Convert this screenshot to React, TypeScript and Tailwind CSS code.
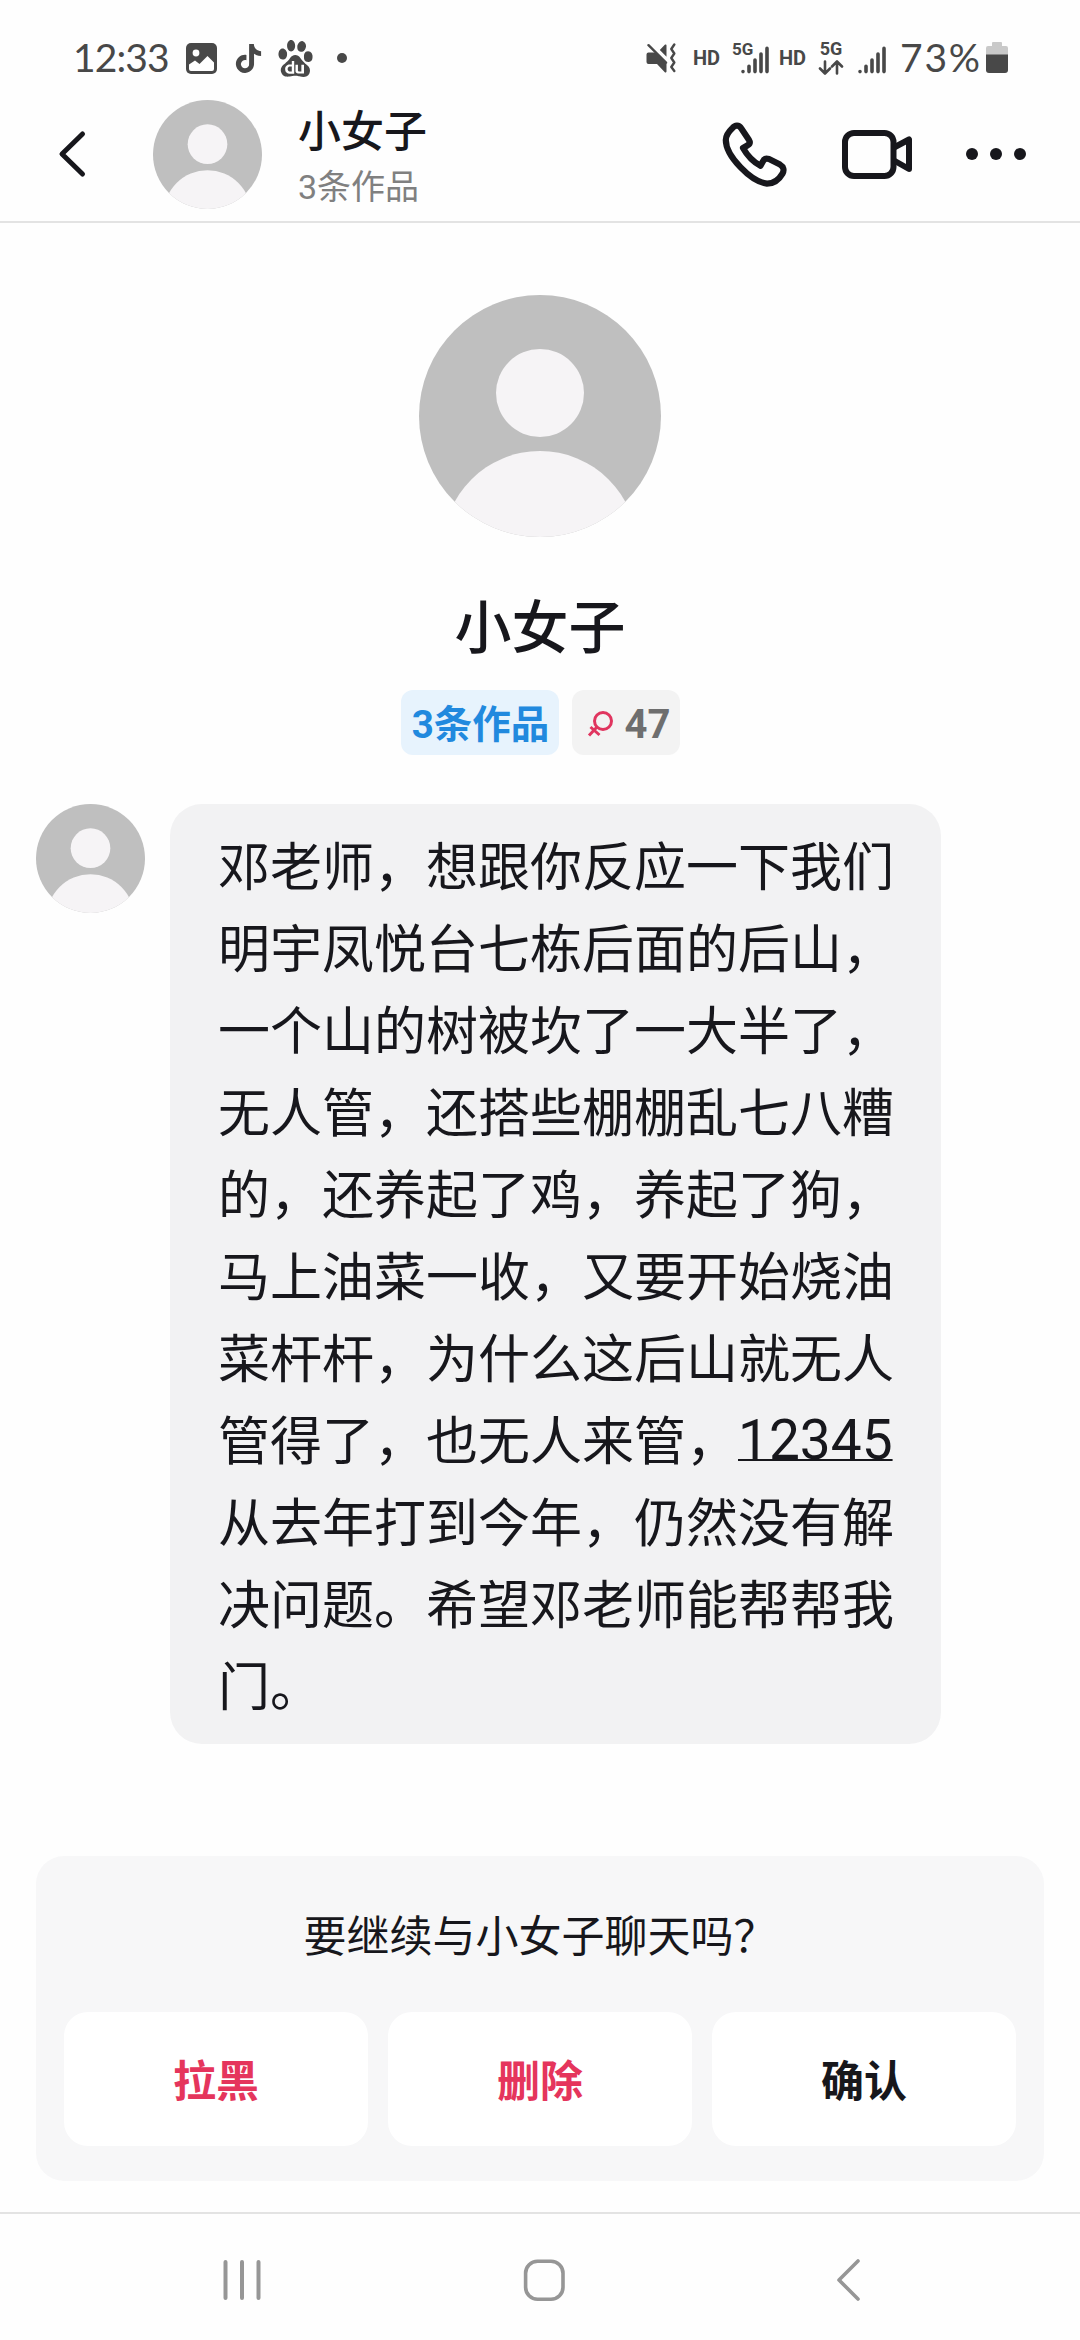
import { SiBaidu, SiTiktok } from 'react-icons/si';

const messageLines = [
  '邓老师，想跟你反应一下我们',
  '明宇凤悦台七栋后面的后山，',
  '一个山的树被坎了一大半了，',
  '无人管，还搭些棚棚乱七八糟',
  '的，还养起了鸡，养起了狗，',
  '马上油菜一收，又要开始烧油',
  '菜杆杆，为什么这后山就无人',
  '管得了，也无人来管，12345',
  '从去年打到今年，仍然没有解',
  '决问题。希望邓老师能帮帮我',
  '门。',
];

const actions = [
  { label: '拉黑', className: 'text-[#e5355c]' },
  { label: '删除', className: 'text-[#e5355c]' },
  { label: '确认', className: 'text-[#17171c]' },
];

function Avatar({ className }: { className: string }) {
  return (
    <div className={`shrink-0 overflow-hidden rounded-full bg-[#bfbfbf] ${className}`}>
      <svg viewBox="0 0 242 242" className="h-full w-full" fill="#f6f4f6">
        <circle cx="121" cy="98" r="44" />
        <circle cx="121" cy="253" r="97" />
      </svg>
    </div>
  );
}

function Signal({ className }: { className: string }) {
  return (
    <svg
      viewBox="0 0 28 28"
      className={`h-7 w-7 shrink-0 ${className}`}
      stroke="currentColor"
      strokeWidth="3.6"
      strokeLinecap="round"
    >
      <path d="M2 25.6v0M8 25.6v-5.4M14 25.6V14M20 25.6V8M26 25.6V2.4" />
    </svg>
  );
}

function StatusBar() {
  return (
    <div className="flex h-[100px] items-start pt-[38px] pl-[73px] text-[#484848]">
      <div className="flex h-10 w-[573px] items-center">
        <span className="w-[113px] pb-0.5 font-[Lato] text-[39px] leading-9 tracking-[-0.9px]">12:33</span>
        <svg viewBox="0 0 31 31" className="h-[31px] w-[31px]">
          <rect width="31" height="31" rx="5" fill="currentColor" />
          <circle cx="10" cy="10" r="3.4" fill="#fefefe" />
          <path
            d="M3 21.5l6-4 4.5 3.5L21.5 13l6.5 6.5V26a2 2 0 0 1-2 2H5a2 2 0 0 1-2-2z"
            fill="#fefefe"
          />
        </svg>
        <SiTiktok className="ml-[17px] h-[29px] w-[29px]" />
        <SiBaidu className="ml-[14px] h-[37px] w-[37px]" />
        <span className="ml-[23px] h-[10px] w-[10px] rounded-full bg-current" />
      </div>
      <div className="flex h-10 items-center font-[Roboto] font-bold">
        <svg viewBox="0 0 30 30" className="h-[30px] w-[30px]" fill="currentColor">
          <path d="M2.5 9.5h7l11 11v8a1 1 0 0 1-1.7.7L11 21H2.5A2 2 0 0 1 .5 19v-7.5a2 2 0 0 1 2-2zM13.8 7 18.8 1.8a1 1 0 0 1 1.7.7v11.2z" />
          <path
            d="M2.5 2.2 20 19.7M28.3 1.5l-3 4.5 3 4.5-3 4.5 3 4.5-3 4.5 3 4"
            fill="none"
            stroke="currentColor"
            strokeWidth="2.4"
            strokeLinecap="round"
            strokeLinejoin="round"
          />
        </svg>
        <span className="ml-[17px] w-[28px] text-[20px] leading-5">HD</span>
        <span className="ml-[11px] h-10 w-[9px] pt-px text-[17px] leading-5">5G</span>
        <Signal className="mt-1" />
        <span className="ml-[10px] w-[28px] text-[20px] leading-5">HD</span>
        <div className="ml-[11px] flex h-10 w-[26px] flex-col items-center">
          <span className="text-[18px] leading-[22px]">5G</span>
          <svg
            viewBox="0 0 26 15"
            className="h-[15px] w-[26px]"
            fill="none"
            stroke="currentColor"
            strokeWidth="2.6"
            strokeLinecap="round"
            strokeLinejoin="round"
          >
            <path d="M7 1.5v11.5M2 8.5l5 5 5-5M19 13.5V2M14 6.5l5-5 5 5" />
          </svg>
        </div>
        <Signal className="mt-1 ml-[14px]" />
        <span className="ml-[14px] w-[86px] pb-0.5 font-[Lato] text-[39px] leading-9 font-normal tracking-[1.8px]">
          73%
        </span>
        <svg viewBox="0 0 22 32" className="h-8 w-[22px]">
          <path d="M6 4V1a1 1 0 0 1 1-1h8a1 1 0 0 1 1 1v3h4a2 2 0 0 1 2 2v7H0V6a2 2 0 0 1 2-2z" fill="#c9c9c9" />
          <path d="M0 12.5h22V28a3 3 0 0 1-3 3H3a3 3 0 0 1-3-3z" fill="#484848" />
        </svg>
      </div>
    </div>
  );
}

function ChatHeader() {
  return (
    <header className="flex h-[123px] items-start border-b-2 border-[#e3e3e3] pl-[57px] text-[#17171c]">
      <svg
        viewBox="0 0 30 50"
        className="mt-[29px] h-[50px] w-[30px]"
        fill="none"
        stroke="currentColor"
        strokeWidth="5"
        strokeLinecap="round"
        strokeLinejoin="round"
      >
        <path d="M25.5 5 5 25l20.5 20" />
      </svg>
      <Avatar className="ml-[66px] h-[109px] w-[109px]" />
      <div className="ml-[36px] w-[422px]">
        <div className="mt-1.5 text-[43px] leading-[52px] font-medium">小女子</div>
        <div className="mt-[6px] text-[34px] leading-[46px] text-[#808080]">3条作品</div>
      </div>
      <svg
        viewBox="0 0 70 70"
        className="mt-[20px] h-[70px] w-[70px]"
        fill="none"
        stroke="currentColor"
        strokeWidth="6.2"
        strokeLinejoin="round"
      >
        <path d="M12.5 8C15 5 19 4.8 21 8l8 12c1.3 2.2.6 4-1.3 5.3L23 28c4.5 8 10.5 14 17.5 17.8l2.5-4.5c1-2.6 3.2-3 6-2.2l11 5.5c3.5 2 4.5 5.5 2.5 9-3.5 6-9 10-15.5 10C31 62 5.8 36 5.8 20c0-4.5 3-8.5 6.7-12z" />
      </svg>
      <svg
        viewBox="0 0 74 54"
        className="mt-[27px] ml-[50px] h-[54px] w-[74px]"
        fill="none"
        stroke="currentColor"
        strokeWidth="6"
        strokeLinejoin="round"
      >
        <rect x="5" y="6" width="48.5" height="43" rx="9" />
        <path d="M54 20.5 69 12.5V42L54 33.5" />
      </svg>
      <div className="mt-[48px] ml-[52px] flex gap-3">
        <span className="h-3 w-3 rounded-full bg-current" />
        <span className="h-3 w-3 rounded-full bg-current" />
        <span className="h-3 w-3 rounded-full bg-current" />
      </div>
    </header>
  );
}

function Profile() {
  return (
    <section className="flex h-[581px] flex-col items-center pt-[72px]">
      <Avatar className="h-[242px] w-[242px]" />
      <h1 className="mt-[52px] text-[57px] leading-[80px] font-medium text-[#17171c]">小女子</h1>
      <div className="mt-[21px] flex gap-[13px] text-[38.5px] leading-[70px] font-bold">
        <span className="flex h-[65px] w-[158px] justify-center rounded-xl bg-[#e7f3fd] pl-0.5 whitespace-nowrap text-[#2189de]">
          3条作品
        </span>
        <span className="flex h-[65px] w-[108px] rounded-xl bg-[#f3f3f3] pl-[15px] text-[40px] text-[#6e6e6e]">
          <svg
            viewBox="0 0 26 28"
            className="mt-[19px] mr-[12px] h-7 w-[26px]"
            fill="none"
            stroke="#e0355f"
            strokeWidth="3"
          >
            <circle cx="16" cy="12" r="8.5" />
            <path d="M10 18 2 26.5M3.5 18l9 8" />
          </svg>
          47
        </span>
      </div>
    </section>
  );
}

function MessageLine({ text }: { text: string }) {
  // phone numbers are underlined and slightly larger than the CJK text
  const [before, phone] = text.split(/(\d+)/);

  return (
    <div className="flex h-[82px] whitespace-nowrap">
      <span>{before}</span>
      {phone && (
        <span className="text-[55px] leading-[77px] underline decoration-2 underline-offset-0 [text-decoration-skip-ink:none]">
          {phone}
        </span>
      )}
    </div>
  );
}

export default function App() {
  return (
    <div className="flex h-[2340px] w-[1080px] flex-col bg-[#fefefe] font-['Roboto','Noto_Sans_CJK_SC',sans-serif]">
      <StatusBar />
      <ChatHeader />
      <Profile />

      <div className="flex items-start pl-[36px]">
        <Avatar className="h-[109px] w-[109px]" />
        <div className="ml-[25px] h-[940px] w-[771px] rounded-[32px] bg-[#f2f2f3] pt-[24px] pl-[48px] text-[52px] leading-[82px] text-[#17171c]">
          {messageLines.map((line) => (
            <MessageLine key={line} text={line} />
          ))}
        </div>
      </div>

      <div className="mx-[36px] mt-[112px] h-[325px] rounded-[28px] bg-[#f7f7f8] px-[28px] pt-[51px]">
        <p className="text-center text-[43px] leading-[60px] text-[#17171c]">要继续与小女子聊天吗？</p>
        <div className="mt-[45px] grid grid-cols-3 gap-[20px]">
          {actions.map((action) => (
            <button
              key={action.label}
              className={`h-[134px] rounded-[24px] bg-white pt-1.5 text-[43px] font-bold ${action.className}`}
            >
              {action.label}
            </button>
          ))}
        </div>
      </div>

      <nav className="mt-[31px] flex h-[128px] items-start border-t-2 border-[#e3e3e3] pt-[44px] pl-[222px] text-[#969696]">
        <svg viewBox="0 0 40 44" className="h-11 w-10" stroke="currentColor" strokeWidth="4" strokeLinecap="round">
          <path d="M3.5 4v36M20 4v36M36.5 4v36" />
        </svg>
        <svg
          viewBox="0 0 44 44"
          className="ml-[260px] h-11 w-11"
          fill="none"
          stroke="currentColor"
          strokeWidth="3.6"
        >
          <rect x="3.6" y="3.2" width="37.4" height="38" rx="12" />
        </svg>
        <svg
          viewBox="0 0 26 44"
          className="ml-[269px] h-11 w-[26px]"
          fill="none"
          stroke="currentColor"
          strokeWidth="3.6"
          strokeLinecap="round"
          strokeLinejoin="round"
        >
          <path d="M23 3 4 22l19 19" />
        </svg>
      </nav>
    </div>
  );
}
